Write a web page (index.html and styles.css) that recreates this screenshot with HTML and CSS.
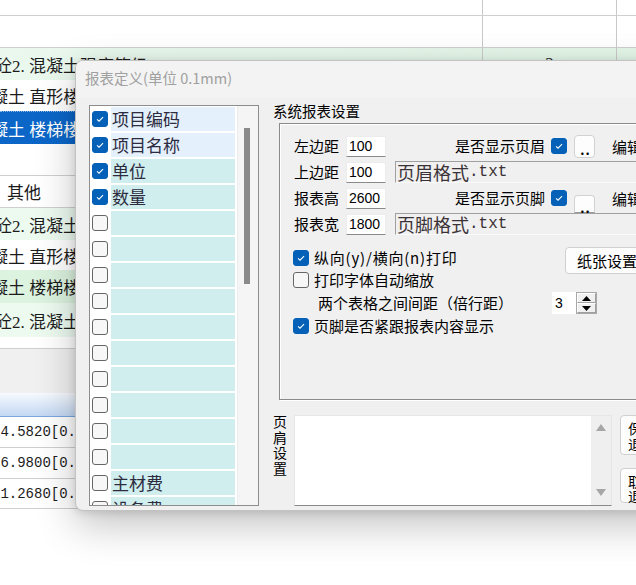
FILE: index.html
```html
<!DOCTYPE html>
<html lang="zh-CN">
<head>
<meta charset="utf-8">
<title>报表定义</title>
<link rel="stylesheet" href="styles.css">
</head>
<body>
<div class="app">
  <div class="row r0 line"><div class="c1"></div><div class="c2"></div><div class="c3"></div></div>
  <div class="row r1 line"><div class="c1"></div><div class="c2"></div><div class="c3"></div></div>
  <div class="row r2 g1"><div class="c1"><span class="txt lead">砼2. 混凝土强度等级 C30</span></div><div class="c2"><span class="txt">2</span></div><div class="c3"></div></div>
  <div class="row r3"><span class="txt cut">凝土 直形楼梯</span></div>
  <div class="row r4 sel"><span class="txt cut">凝土 楼梯楼板</span></div>
  <div class="row r5 line"></div>
  <div class="row r6 line"><span class="txt grp">其他</span></div>
  <div class="row r7 g2"><span class="txt lead">砼2. 混凝土</span></div>
  <div class="row r8"><span class="txt cut">凝土 直形楼梯</span></div>
  <div class="row r9 g3"><span class="txt cut">凝土 楼梯楼板</span></div>
  <div class="row r10 g2"><span class="txt lead">砼2. 混凝土</span></div>
  <div class="row r11 line"></div>
  <div class="row r12"></div>
  <div class="row r13"></div>
  <div class="row r14 line"><span class="mono">14.5820[0.</span></div>
  <div class="row r15 line"><span class="mono">16.9800[0.</span></div>
  <div class="row r16 line"><span class="mono">11.2680[0.</span></div>
</div>

<div class="dialog">
  <div class="title">报表定义(单位 0.1mm)</div>
  <div class="dbody">
    <div class="list">
      <div class="items">
        <div class="item"><span class="cb on"><svg viewBox="0 0 16 16"><path d="M4.6 8.3l2.3 2.2 4.6-4.7"/></svg></span><span class="cell blue">项目编码</span></div>
        <div class="item"><span class="cb on"><svg viewBox="0 0 16 16"><path d="M4.6 8.3l2.3 2.2 4.6-4.7"/></svg></span><span class="cell blue">项目名称</span></div>
        <div class="item"><span class="cb on"><svg viewBox="0 0 16 16"><path d="M4.6 8.3l2.3 2.2 4.6-4.7"/></svg></span><span class="cell">单位</span></div>
        <div class="item"><span class="cb on"><svg viewBox="0 0 16 16"><path d="M4.6 8.3l2.3 2.2 4.6-4.7"/></svg></span><span class="cell">数量</span></div>
        <div class="item"><span class="cb"></span><span class="cell"></span></div>
        <div class="item"><span class="cb"></span><span class="cell"></span></div>
        <div class="item"><span class="cb"></span><span class="cell"></span></div>
        <div class="item"><span class="cb"></span><span class="cell"></span></div>
        <div class="item"><span class="cb"></span><span class="cell"></span></div>
        <div class="item"><span class="cb"></span><span class="cell"></span></div>
        <div class="item"><span class="cb"></span><span class="cell"></span></div>
        <div class="item"><span class="cb"></span><span class="cell"></span></div>
        <div class="item"><span class="cb"></span><span class="cell"></span></div>
        <div class="item"><span class="cb"></span><span class="cell"></span></div>
        <div class="item"><span class="cb"></span><span class="cell">主材费</span></div>
        <div class="item"><span class="cb"></span><span class="cell">设备费</span></div>
      </div>
      <div class="vscroll"><div class="thumb"></div></div>
    </div>

    <div class="right">
      <div class="sect">系统报表设置</div>
      <div class="group">
        <div class="form">
          <span class="lbl">左边距</span><span class="inp">100</span>
          <div class="opt"><span class="optt">是否显示页眉</span><span class="cb on"><svg viewBox="0 0 16 16"><path d="M4.6 8.3l2.3 2.2 4.6-4.7"/></svg></span><span class="dots">. .</span><span class="edit">编辑</span></div>
          <span class="lbl">上边距</span><span class="inp">100</span>
          <div class="tb"><span class="tbc">页眉格式</span><span class="tba">.txt</span></div>
          <span class="lbl">报表高</span><span class="inp">2600</span>
          <div class="opt"><span class="optt">是否显示页脚</span><span class="cb on"><svg viewBox="0 0 16 16"><path d="M4.6 8.3l2.3 2.2 4.6-4.7"/></svg></span><span class="dots low">. .</span><span class="edit">编辑</span></div>
          <span class="lbl">报表宽</span><span class="inp">1800</span>
          <div class="tb"><span class="tbc">页脚格式</span><span class="tba">.txt</span></div>
        </div>
        <div class="opts">
          <div class="orow o1">
            <div class="chk"><span class="cb on"><svg viewBox="0 0 16 16"><path d="M4.6 8.3l2.3 2.2 4.6-4.7"/></svg></span><span class="wide">纵向(y)/横向(n)打印</span></div>
            <span class="pbtn">纸张设置</span>
          </div>
          <div class="orow o2">
            <div class="chk"><span class="cb"></span><span>打印字体自动缩放</span></div>
          </div>
          <div class="orow o3">
            <span class="gap-lbl">两个表格之间间距（倍行距）</span>
            <div class="spin">
              <span class="spin-in">3</span>
              <div class="spin-btns">
                <span class="sb"><svg width="9" height="5" viewBox="0 0 9 5"><path d="M0 5h9L4.5 0z"/></svg></span>
                <span class="sb"><svg width="9" height="5" viewBox="0 0 9 5"><path d="M0 0h9L4.5 5z"/></svg></span>
              </div>
            </div>
          </div>
          <div class="orow o4">
            <div class="chk"><span class="cb on"><svg viewBox="0 0 16 16"><path d="M4.6 8.3l2.3 2.2 4.6-4.7"/></svg></span><span>页脚是否紧跟报表内容显示</span></div>
          </div>
        </div>
      </div>
      <div class="bottom">
        <div class="vlabel">页肩设置</div>
        <div class="memo">
          <div class="memo-sb">
            <svg width="10" height="7" viewBox="0 0 10 7"><path d="M0 7h10L5 0z"/></svg>
            <svg width="10" height="7" viewBox="0 0 10 7"><path d="M0 0h10L5 7z"/></svg>
          </div>
        </div>
        <div class="btns">
          <span class="dbtn b1">保存<br>退出</span>
          <span class="dbtn b2">取消<br>退出</span>
        </div>
      </div>
    </div>
  </div>
</div>
</body>
</html>
```

FILE: styles.css
```css
* { box-sizing: border-box; margin: 0; padding: 0; }
html, body { width: 636px; height: 585px; overflow: hidden; background: #fff; }
body { position: relative; font-family: "Noto Sans CJK SC", sans-serif; color: #000; }

/* ---------- background application ---------- */
.app { width: 636px; }
.row {
  display: flex; align-items: center; width: 636px; overflow: hidden; white-space: nowrap;
  font-family: "Liberation Serif", "Noto Sans CJK SC", serif; font-size: 17px; color: #1c1c1c;
}
.line { border-bottom: 1px solid #cfcfcf; }
.c1 { width: 483px; height: 100%; border-right: 1px solid #c9c9c9; display: flex; align-items: center; overflow: hidden; }
.c2 { width: 134px; height: 100%; border-right: 1px solid #c9c9c9; display: flex; align-items: center; justify-content: center; }
.c3 { flex: 1; height: 100%; }
.r0 { height: 16px; }
.r1 { height: 32px; }
.r2 { height: 32px; }
.r3 { height: 31px; }
.r4 { height: 33px; }
.r5 { height: 32px; }
.r6 { height: 32px; }
.r7 { height: 32px; }
.r8 { height: 30px; }
.r9 { height: 33px; }
.r10 { height: 34px; }
.r11 { height: 12px; }
.r12 { height: 44px; background: #f0f0f0; }
.r13 { height: 24px; background: linear-gradient(#f7faff, #c3d8f3); border-bottom: 1px solid #7ba6df; }
.r14, .r15 { height: 31px; }
.r16 { height: 30px; }
.g1 { background: linear-gradient(90deg, #eaf8ee, #e3f6e8); }
.g2 { background: #ecfaf0; }
.g3 { background: #dcf3df; }
.sel { background: #0b66c8; color: #fff; border-top: 1px dotted #8fb8e6; }
.txt { display: inline-block; }
.lead { margin-left: -5px; }
.cut { margin-left: -9px; }
.grp { margin-left: 7px; }
.mono { font-family: "Liberation Mono", monospace; font-size: 14px; margin-left: -8px; color: #1c1c1c; }

/* ---------- dialog ---------- */
.dialog {
  position: absolute; left: 75px; top: 60px; width: 620px; height: 451px;
  background: #f0f0f0; border: 1px solid #c2c2c2; border-radius: 8px;
  box-shadow: 0 14px 40px rgba(0,0,0,.24), 0 2px 8px rgba(0,0,0,.12);
  overflow: hidden; font-size: 15px; color: #000;
}
.title {
  height: 37px; background: #f3f3f3; padding-left: 9px;
  line-height: 34px; font-size: 14.5px; color: #a0a0a0;
}
.dbody { display: flex; padding: 7px 0 0 13px; gap: 14px; }

/* list */
.list {
  width: 170px; height: 401px; flex-shrink: 0; border: 1px solid #8d8d8d; background: #fff;
  display: flex;
}
.items { width: 147px; height: 100%; display: flex; flex-direction: column; gap: 2px; padding: 1px 0 0 2px; overflow: hidden; }
.item { display: flex; align-items: center; gap: 3px; height: 24px; flex-shrink: 0; }
.cell {
  width: 124px; height: 24px; background: #cfeeed; line-height: 24px;
  font-size: 17px; padding-left: 1px; color: #2c2b3f; white-space: nowrap;
}
.cell.blue { background: #e4f0fb; }
.vscroll { width: 21px; height: 100%; background: #f5f5f5; border-left: 1px solid #ececec; }
.thumb { margin: 22px 0 0 6px; width: 6px; height: 156px; background: #8a8a8a; }

/* checkboxes */
.cb {
  width: 16px; height: 16px; flex-shrink: 0; border-radius: 3px;
  border: 1px solid #666; background: #f7f7f7; display: inline-flex;
}
.cb.on { background: #0561b8; border-color: #0561b8; }
.cb svg { width: 14px; height: 14px; }
.cb svg path { fill: none; stroke: #fff; stroke-width: 1.2; }

/* right column */
.right { display: flex; flex-direction: column; margin-top: -4px; width: 440px; flex-shrink: 0; }
.sect { height: 20px; line-height: 20px; font-size: 14.5px; }
.group {
  margin: 2px 0 0 6px; width: 420px; height: 277px;
  border: 1px solid #8a8a8a; box-shadow: inset 1px 1px 0 #fff, 1px 1px 0 #fff;
  padding: 9px 0 0 14px;
}
.form { display: grid; grid-template-columns: 52px 40px auto; grid-auto-rows: 26px; align-items: center; }
.lbl { font-size: 15px; line-height: 20px; }
.inp {
  height: 21px; background: #fff; border: 1px solid #ececec; border-bottom-color: #8a8a8a;
  font-family: "Liberation Sans", sans-serif; font-size: 14px; line-height: 19px; padding-left: 2px;
}
.opt { display: flex; align-items: center; padding-left: 69px; height: 26px; white-space: nowrap; }
.optt { width: 90px; font-size: 15px; line-height: 20px; }
.opt .cb { margin-left: 6px; }
.dots {
  margin-left: 7px; width: 21px; height: 23px; background: #fdfdfd;
  border: 1px solid #d2d2d2; border-radius: 4px; font-size: 13px; line-height: 27px;
  text-align: center; font-weight: bold; letter-spacing: -1px;
}
.dots.low { margin-top: 12px; height: 18px; border-bottom: 1px solid #9a9a9a; border-radius: 4px 4px 0 0; line-height: 23px; }
.edit { margin-left: 17px; font-size: 15px; }
.tb {
  margin-left: 9px; width: 260px; height: 22px; background: #f0f0f0;
  border-top: 1px solid #a0a0a0; border-left: 1px solid #a0a0a0; border-bottom: 1px solid #fafafa;
  padding-left: 1px; display: flex; align-items: center; white-space: nowrap; color: #3a3236;
}
.tbc { font-size: 18px; line-height: 20px; }
.tba { font-family: "Liberation Mono", monospace; font-size: 16px; }

.opts { margin: 5px 0 0 -1px; }
.orow { display: grid; align-items: center; white-space: nowrap; }
.o1 { height: 26px; grid-template-columns: 272px auto; }
.o2 { height: 24px; }
.o3 { height: 21px; grid-template-columns: 259px auto; }
.o4 { height: 26px; }
.chk { display: flex; align-items: center; gap: 5px; font-size: 15px; line-height: 20px; }
.wide { letter-spacing: 0.8px; }
.pbtn {
  margin-top: 5px; width: 90px; height: 27px; background: #fdfdfd; border: 1px solid #d0d0d0;
  border-radius: 4px; padding-left: 11px; line-height: 25px; font-size: 15px;
}
.gap-lbl { padding-left: 25px; font-size: 15px; line-height: 20px; }
.spin { display: flex; height: 22px; }
.spin-in { width: 24px; background: #fff; font-family: "Liberation Sans", sans-serif; font-size: 14px; line-height: 22px; padding-left: 3px; }
.spin-btns { width: 21px; border: 1px solid #a8a8a8; display: flex; flex-direction: column; background: #f0f0f0; }
.sb {
  flex: 1; display: flex; align-items: center; justify-content: center;
  border: 1px solid #fff; border-right-color: #a0a0a0; border-bottom-color: #a0a0a0;
}
.sb svg path { fill: #000; }

.bottom { display: flex; margin-top: 15px; }
.vlabel {
  writing-mode: vertical-rl; width: 14px; margin-right: 7px;
  font-size: 14px; line-height: 14px; letter-spacing: 1.5px;
}
.memo {
  width: 318px; height: 91px; background: #fff; border: 1px solid #e6e6e6;
  border-bottom-color: #8a8a8a; display: flex; justify-content: flex-end; flex-shrink: 0;
}
.memo-sb {
  width: 20px; height: 100%; background: #efefef; display: flex; flex-direction: column;
  justify-content: space-between; align-items: center; padding: 8px 0 9px;
}
.memo-sb svg path { fill: #a6a6a6; }
.btns { margin-left: 8px; display: flex; flex-direction: column; gap: 13px; }
.dbtn {
  display: block; width: 60px; background: #fdfdfd; border: 1px solid #d0d0d0;
  border-radius: 4px; font-size: 14px; padding-left: 7px;
}
.b1 { height: 40px; line-height: 16px; padding-top: 4px; }
.b2 { height: 35px; line-height: 15px; padding-top: 5px; }
```
